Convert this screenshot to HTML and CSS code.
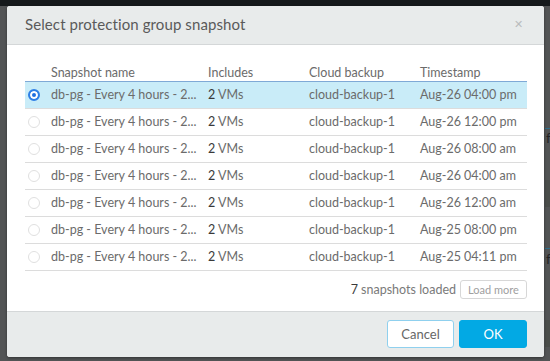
FILE: index.html
```html
<!DOCTYPE html>
<html>
<head>
<meta charset="utf-8">
<link rel="stylesheet" href="styles.css">
</head>
<body>
<div class="topbar"></div>
<div class="page">
  <div class="bg-line bg-line-1"></div>
  <div class="bg-line bg-line-2"></div>
  <div class="bg-text bg-text-1">f</div>
  <div class="bg-text bg-text-2">f</div>
  <div class="bg-band bg-band-1"></div>
  <div class="bg-band bg-band-2"></div>
</div>
<div class="modal">
  <div class="modal-header">
    <span class="modal-title">Select protection group snapshot</span>
    <span class="close">&#x2715;</span>
  </div>
  <div class="modal-body">
    <table class="grid">
      <thead>
        <tr>
          <th class="c-radio"></th>
          <th class="c-name">Snapshot name</th>
          <th class="c-inc">Includes</th>
          <th class="c-cloud">Cloud backup</th>
          <th class="c-ts">Timestamp</th>
        </tr>
      </thead>
      <tbody>
        <tr class="selected">
          <td class="c-radio"><span class="radio checked"></span></td>
          <td>db-pg - Every 4 hours - 2...</td>
          <td><b>2</b> VMs</td>
          <td>cloud-backup-1</td>
          <td>Aug-26 04:00 pm</td>
        </tr>
        <tr>
          <td class="c-radio"><span class="radio"></span></td>
          <td>db-pg - Every 4 hours - 2...</td>
          <td><b>2</b> VMs</td>
          <td>cloud-backup-1</td>
          <td>Aug-26 12:00 pm</td>
        </tr>
        <tr>
          <td class="c-radio"><span class="radio"></span></td>
          <td>db-pg - Every 4 hours - 2...</td>
          <td><b>2</b> VMs</td>
          <td>cloud-backup-1</td>
          <td>Aug-26 08:00 am</td>
        </tr>
        <tr>
          <td class="c-radio"><span class="radio"></span></td>
          <td>db-pg - Every 4 hours - 2...</td>
          <td><b>2</b> VMs</td>
          <td>cloud-backup-1</td>
          <td>Aug-26 04:00 am</td>
        </tr>
        <tr>
          <td class="c-radio"><span class="radio"></span></td>
          <td>db-pg - Every 4 hours - 2...</td>
          <td><b>2</b> VMs</td>
          <td>cloud-backup-1</td>
          <td>Aug-26 12:00 am</td>
        </tr>
        <tr>
          <td class="c-radio"><span class="radio"></span></td>
          <td>db-pg - Every 4 hours - 2...</td>
          <td><b>2</b> VMs</td>
          <td>cloud-backup-1</td>
          <td>Aug-25 08:00 pm</td>
        </tr>
        <tr>
          <td class="c-radio"><span class="radio"></span></td>
          <td>db-pg - Every 4 hours - 2...</td>
          <td><b>2</b> VMs</td>
          <td>cloud-backup-1</td>
          <td>Aug-25 04:11 pm</td>
        </tr>
      </tbody>
    </table>
    <div class="grid-footer">
      <span class="count"><b>7</b> snapshots loaded</span>
      <button class="load-more">Load more</button>
    </div>
  </div>
  <div class="modal-footer">
    <button class="btn btn-outline">Cancel</button>
    <button class="btn btn-primary">OK</button>
  </div>
</div>
</body>
</html>
```
FILE: styles.css
```css
* { box-sizing: border-box; }
html, body {
  margin: 0;
  padding: 0;
  width: 550px;
  height: 361px;
  overflow: hidden;
}
body {
  background: #525455;
  font-family: Lato, "Open Sans", sans-serif;
  position: relative;
}
.topbar {
  height: 6px;
  background: #15191b;
}
.page {
  position: relative;
  height: 355px;
}
.bg-line {
  position: absolute;
  left: 545px;
  width: 10px;
  height: 1px;
  background: #2f6f8c;
}
.bg-line-1 { top: 122px; }
.bg-line-2 { top: 242px; }
.bg-text {
  position: absolute;
  left: 546px;
  color: #222;
  font-size: 13px;
}
.bg-text-1 { top: 124px; }
.bg-text-2 { top: 245px; }
.bg-band {
  position: absolute;
  left: 545px;
  width: 10px;
  height: 27px;
  background: #4a4d4a;
}
.bg-band-1 { top: 174px; }
.bg-band-2 { top: 314px; }

.modal {
  position: absolute;
  left: 7px;
  top: 6px;
  width: 537px;
  height: 351px;
  background: #fff;
  border-radius: 3px;
  overflow: hidden;
  display: flex;
  flex-direction: column;
  box-shadow: 0 1px 3px rgba(0,0,0,0.4);
}
.modal-header {
  height: 39px;
  flex: none;
  background: #e8ebeb;
  border-bottom: 1px solid #d4d7d8;
  display: flex;
  align-items: center;
  justify-content: space-between;
  padding: 0 21px 0 18px;
}
.modal-title {
  font-size: 15px;
  color: #5a5a5a;
  font-weight: 400;
  letter-spacing: 0.1px;
  margin-top: -2px;
}
.close {
  color: #b9bcbd;
  font-size: 11px;
  margin-top: -2px;
}
.modal-body {
  flex: 1;
  padding: 16px 17px 0 18px;
}
.grid {
  width: 502px;
  border-collapse: collapse;
  table-layout: fixed;
  font-size: 12.5px;
  color: #6b6b6b;
}
.grid th {
  font-weight: 400;
  text-align: left;
  height: 20px;
  padding: 0 4px 1px 4px;
  color: #6b6b6b;
  vertical-align: bottom;
}
.grid td {
  height: 27px;
  padding: 0 4px;
  border-bottom: 1px solid #dcdcdc;
  white-space: nowrap;
  overflow: hidden;
}
.grid td b { font-weight: 400; color: #3a3a3a; }
.grid thead tr { border-bottom: 1px solid #7fa9d6; }
.c-radio { width: 22px; }
.c-name { width: 157px; }
.c-inc { width: 101px; }
.c-cloud { width: 111px; }
.c-ts { width: 111px; }
.grid td.c-radio { padding: 0 0 0 3px; }
.grid tr.selected td { background: #c9ecf8; }
.radio {
  display: block;
  width: 12px;
  height: 12px;
  border-radius: 50%;
  border: 1px solid #e0e0e0;
  background: #fff;
}
.radio.checked {
  border: 2px solid #2e7fe6;
  background: #1f6fe0;
  box-shadow: inset 0 0 0 2px #fff;
}
.grid-footer {
  display: flex;
  justify-content: flex-end;
  align-items: center;
  gap: 4px;
  margin-top: 9px;
  width: 502px;
}
.count {
  font-size: 12.5px;
  color: #7a7a7a;
}
.count b { font-weight: 400; color: #3a3a3a; }
.load-more {
  font-family: inherit;
  font-size: 11px;
  color: #a0a0a0;
  background: #fff;
  border: 1px solid #d7d7d7;
  border-radius: 3px;
  height: 19px;
  width: 67px;
  padding: 0;
}
.modal-footer {
  height: 46px;
  flex: none;
  background: #e8ebeb;
  border-top: 1px solid #d4d7d8;
  display: flex;
  justify-content: flex-end;
  align-items: center;
  gap: 5px;
  padding: 0 17px 0 0;
}
.btn {
  font-family: inherit;
  font-size: 13px;
  height: 28px;
  width: 67px;
  border-radius: 3px;
  padding: 0;
  margin-top: -1px;
}
.btn-outline {
  background: #fff;
  border: 1px solid #8fd0ee;
  color: #666;
}
.btn-primary {
  background: #02a9e4;
  border: 1px solid #02a9e4;
  color: #fff;
  width: 68px;
}
```
